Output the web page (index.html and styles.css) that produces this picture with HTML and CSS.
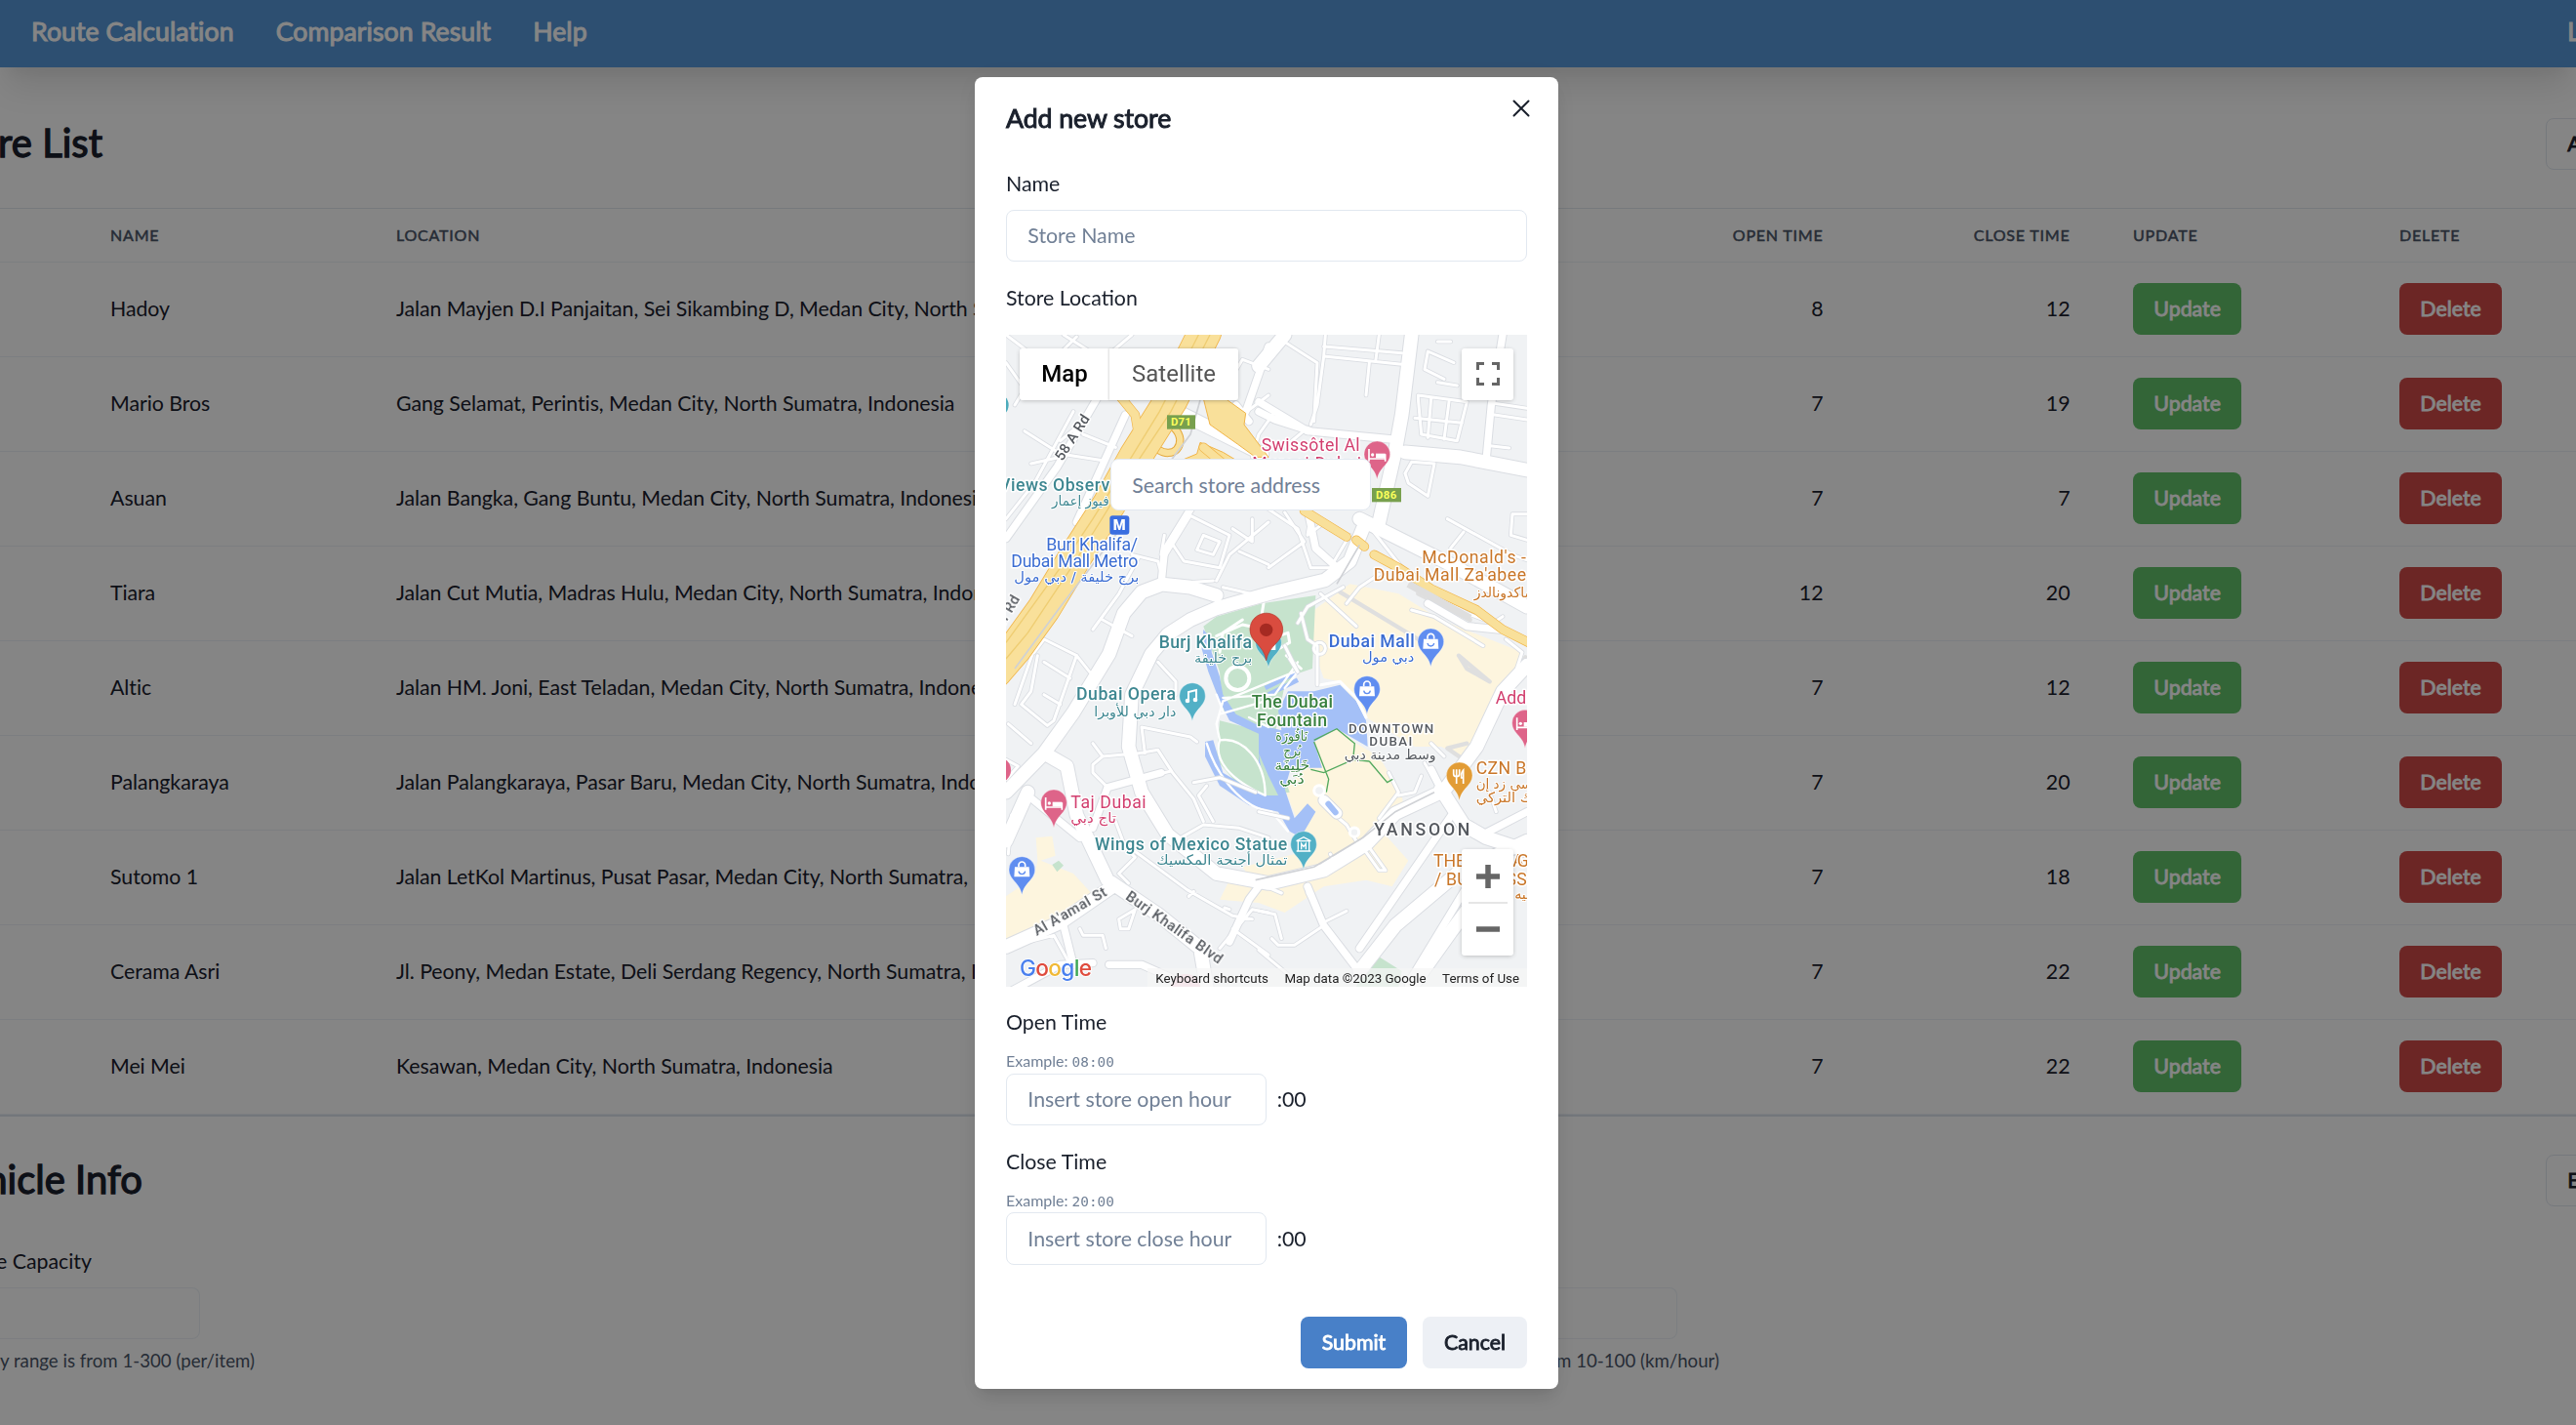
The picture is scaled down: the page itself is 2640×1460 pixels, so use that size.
FILE: index.html
```html
<!DOCTYPE html>
<html lang="en">
<head>
<meta charset="utf-8">
<title>Store List</title>
<link rel="stylesheet" href="styles.css">
</head>
<body>
<div class="app">
  <nav class="nav">
    <div class="nav-links"><a>Route Calculation</a><a>Comparison Result</a><a>Help</a></div>
    <a class="nav-end">Logout</a>
  </nav>

  <section class="section-head">
    <h2 class="title title-stores">Store List</h2>
    <button class="btn outline">Add Store</button>
  </section>

  <div class="table">
    <div class="row head"><span>Name</span><span>Location</span><span class="num">Open Time</span><span class="num">Close Time</span><span class="act">Update</span><span class="act">Delete</span></div>
    <div class="row"><span>Hadoy</span><span>Jalan Mayjen D.I Panjaitan, Sei Sikambing D, Medan City, North Sumatra, Indonesia</span><span class="num">8</span><span class="num">12</span><span class="act"><button class="btn green">Update</button></span><span class="act"><button class="btn red">Delete</button></span></div>
    <div class="row"><span>Mario Bros</span><span>Gang Selamat, Perintis, Medan City, North Sumatra, Indonesia</span><span class="num">7</span><span class="num">19</span><span class="act"><button class="btn green">Update</button></span><span class="act"><button class="btn red">Delete</button></span></div>
    <div class="row"><span>Asuan</span><span>Jalan Bangka, Gang Buntu, Medan City, North Sumatra, Indonesia</span><span class="num">7</span><span class="num">7</span><span class="act"><button class="btn green">Update</button></span><span class="act"><button class="btn red">Delete</button></span></div>
    <div class="row"><span>Tiara</span><span>Jalan Cut Mutia, Madras Hulu, Medan City, North Sumatra, Indonesia</span><span class="num">12</span><span class="num">20</span><span class="act"><button class="btn green">Update</button></span><span class="act"><button class="btn red">Delete</button></span></div>
    <div class="row"><span>Altic</span><span>Jalan HM. Joni, East Teladan, Medan City, North Sumatra, Indonesia</span><span class="num">7</span><span class="num">12</span><span class="act"><button class="btn green">Update</button></span><span class="act"><button class="btn red">Delete</button></span></div>
    <div class="row"><span>Palangkaraya</span><span>Jalan Palangkaraya, Pasar Baru, Medan City, North Sumatra, Indonesia</span><span class="num">7</span><span class="num">20</span><span class="act"><button class="btn green">Update</button></span><span class="act"><button class="btn red">Delete</button></span></div>
    <div class="row"><span>Sutomo 1</span><span>Jalan LetKol Martinus, Pusat Pasar, Medan City, North Sumatra, Indonesia</span><span class="num">7</span><span class="num">18</span><span class="act"><button class="btn green">Update</button></span><span class="act"><button class="btn red">Delete</button></span></div>
    <div class="row"><span>Cerama Asri</span><span>Jl. Peony, Medan Estate, Deli Serdang Regency, North Sumatra, Indonesia</span><span class="num">7</span><span class="num">22</span><span class="act"><button class="btn green">Update</button></span><span class="act"><button class="btn red">Delete</button></span></div>
    <div class="row"><span>Mei Mei</span><span>Kesawan, Medan City, North Sumatra, Indonesia</span><span class="num">7</span><span class="num">22</span><span class="act"><button class="btn green">Update</button></span><span class="act"><button class="btn red">Delete</button></span></div>
  </div>

  <section class="section-head vehicle">
    <h2 class="title title-vehicle">Vehicle Info</h2>
    <button class="btn outline">Edit</button>
  </section>
  <div class="fields">
    <div class="field cap">
      <label>Vehicle Capacity</label>
      <div class="box"></div>
      <p>Capacity range is from 1-300 (per/item)</p>
    </div>
    <div class="field speed">
      <label>Speed</label>
      <div class="box"></div>
      <p>Speed range is from 10-100 (km/hour)</p>
    </div>
  </div>
</div>

<div class="overlay">
  <div class="modal">
    <svg class="close" viewBox="0 0 22 22"><path d="M3.500 3.500 18.500 18.500M18.500 3.500 3.500 18.500"/></svg>
    <header>Add new store</header>
    <div class="body">
      <label>Name</label>
      <div class="input name">Store Name</div>
      <label class="loc">Store Location</label>
      <div class="map">
        <svg class="tiles" viewBox="33 24 1602 2004" preserveAspectRatio="none">
          <defs>
            <g id="lanes">
              <path d="M33 110 90 190 60 240M33 24 160 120 250 30M210 24 330 100 420 24M90 320 200 390 330 410M260 300 200 350M270 330 370 370M33 590 120 480 240 260M110 420 200 400M420 700 500 720 520 790 670 780M520 710 600 580M510 700 520 640M600 580 720 640 690 740 580 720 540 660 600 580M640 640 690 660 670 700 620 685zM680 780 720 700 840 600M700 800 830 830M750 690 840 730M330 900 420 950M440 710 380 820 300 930M120 1000 150 960 250 1010 290 1060M130 960 60 1160M840 130 760 100 700 200M760 270 840 210M790 590 790 660 730 620"/>
              <path d="M130 1010 110 1120 80 1160 160 1225 180 1210 250 1010M150 1030 230 1080M150 1130 200 1160M40 1220 110 1280M33 1330 70 1350 35 1390M500 1030 555 1090 555 1130M460 1310 450 1230 600 1260 620 1275M330 1320 300 1280M330 1320 440 1310 500 1300 545 1370 610 1450 640 1520M345 1415 300 1370 300 1345 330 1320M345 1415 540 1365M650 1410 625 1440 670 1520M610 1400 690 1385 800 1430M570 1570 640 1530 750 1540 840 1570M370 1520 400 1600 430 1630 380 1680 410 1710M400 1590 590 1730 730 1810 790 1820M50 1500 40 1620M100 1890 180 1870 230 1960M260 1850 270 1870 330 1870 340 1910M430 1790 380 1820 385 1850 410 1850 430 1790M690 1910 790 1790 840 1800M730 1850 840 1930M595 1750 610 1735M720 1790 705 1785"/>
              <path d="M1015 24 1010 90 1250 115M1010 60 1250 80M1150 110 1140 210M1180 24 1170 100M880 40 990 110 980 290M1010 90 990 240 970 300M1300 220 1310 330 1420 350 1450 230 1300 210zM1340 220 1330 340M1395 230 1380 345M1290 280 1435 295M1360 45 1400 45M1410 110 1330 75 1320 130 1380 160M1360 170 1420 180M1535 235 1635 250M1535 270 1635 285M1520 365 1580 372M1260 450 1270 480 1330 520 1350 420 1280 415 1260 450M1390 590 1590 700 1700 740M1400 680 1440 630M1635 575 1590 575 1585 640 1635 655M860 260 810 330 790 400M960 310 900 360"/>
              <path d="M840 560 930 620 970 740 1030 740 1090 640M890 570 950 660 840 740M970 580 960 640 1000 610M1000 820 1110 920M930 910 960 860 1070 800M940 880 960 960 990 980 990 1100M1080 850 1120 800 1180 760M1280 870 1350 890 1500 980M1570 960 1620 1000 1600 1060M905 1020 930 1060 890 980M1140 600 1290 790 1450 880 1530 910 1560 890"/>
              <path d="M1000 1430 1020 1480 1080 1530 1110 1580M1130 1600 1180 1670 1200 1670 1150 1600M1180 1510 1240 1430 1210 1370M1240 1440 1290 1430 1310 1380M1320 1340 1360 1410M1380 1320 1340 1280M1040 1640 1030 1620M960 1740 1010 1830 1080 1795M1010 1840 920 1900 870 1900 850 1880M810 1795 860 1805 880 1880M810 1915 900 1990M1540 1490 1520 1430M880 1740 810 1710M810 1490 900 1510"/>
              <circle cx="997" cy="988" r="18" fill="none"/>
            </g>
            <g id="streets">
              <path d="M33 650 190 430 330 190M840 60 770 260M400 270 250 600M740 240 780 290M1560 24 1525 240 1510 400M960 320 1220 345M810 230 960 320M810 260 860 285 970 320M1330 850 1450 920 1550 930M1410 1490 1120 1910M1500 1560 1635 1490M1450 1720 1280 2000M960 1720 1010 1840 1110 1970M720 1890 780 1760 810 1720M100 1440 260 1570M300 1540 345 1415 510 1370M350 1960 450 1960 540 2000M33 2050 200 1960 300 1955M210 1840 240 1960M1340 1360 1400 1480M510 790 520 690 600 560M960 560 985 680 1040 730"/>
            </g>
            <g id="avenues">
              <path d="M480 1005 420 1130 410 1290 450 1430 530 1560 680 1680 840 1710 1010 1670 1140 1590 1230 1495 1380 1425 1480 1290 1560 1120 1635 1040M350 1005 240 1185 150 1310 33 1430M150 1310 220 1350 250 1500 345 1700 500 1805 630 1910 650 2028M33 1905 200 1830 360 1720M1280 24 1250 270 1230 380 1180 600M1260 385 1430 400 1635 440M810 120 890 24M540 250 820 390M1120 590 1260 660 1400 730 1635 860M1120 1980 1230 1840 1420 1680 1635 1580M1370 1420 1440 1530 1510 1570 1635 1610M1520 1700 1400 1860 1280 2028M33 1580 100 1430M350 1005 395 880 450 815 513 791 600 800 680 825M480 1005 530 945 600 900 680 865 850 817 1014 778 1090 720 1130 620"/>
            </g>
            <path id="highway" d="M645 14 540 225 430 400 350 545 250 700 150 865 60 990 0 1060"/>
            <path id="ramps" d="M385 215 430 270 440 330M640 370 700 420M950 565 1080 645M1110 655 1135 675M1165 700 1240 740 1340 805 1480 870 1560 930 1640 970"/>
            <path id="pin" d="M0 58C-6 20-40 12-40-20a40 40 0 0 1 80 0C40 12 6 20 0 58z" stroke="#fff" stroke-opacity=".55" stroke-width="2"/>
            <g id="bag" fill="#fff"><path d="M-22-22h44l2 30h-48z"/><path d="M-10-22v-6a10 10 0 0 1 20 0v6" fill="none" stroke="#fff" stroke-width="5"/><path d="M-10-9c2 12 18 12 20 0" fill="none" stroke="#5f8df0" stroke-width="4"/></g>
            <g id="bed" fill="none" stroke="#fff" stroke-width="5"><path d="M-25-36V2M25-20V2M-25-6H25"/><path d="M-4-22H25V-8H-4z" fill="#fff" stroke="none"/><circle cx="-14" cy="-18" r="5" fill="#fff" stroke="none"/></g>
          </defs>
          <rect x="33" y="24" width="1602" height="2004" fill="#f0f2f4"/>
          <g fill="#fdf5de">
            <path d="M980 870 1090 790 1240 820 1370 900 1620 1000 1610 1060 1440 1320 1370 1290 1290 1290 1140 1200 1060 1090 1010 1080 960 940z"/>
            <path d="M980 1270 1050 1230 1110 1280 1180 1320 1250 1440 1260 1500 1180 1540 1270 1640 1220 1720 1140 1700 1010 1720 890 1800 810 1770 690 1760 720 1700 780 1690 760 1660 960 1610 940 1560 980 1490 930 1520 890 1420 960 1350z"/>
            <path d="M125 1570 175 1565 185 1625 140 1640 240 1680 300 1745 200 1820 33 1920V1750L120 1690 130 1640z"/>
          </g>
          <path d="M680 890 820 850 985 825 975 1050 930 1065 890 1100 860 1250 700 1180 690 1060 640 920z M690 1210 810 1240 860 1300 905 1430 830 1440 740 1400 680 1330z M175 1653 195 1640 210 1655 190 1675z M1140 1950 1170 1930 1250 1980 1240 2028H1110z" fill="#c6e3cd"/>
          <path d="M640 930 665 960 665 1000 690 1075 700 1130 740 1190 800 1220 880 1240 870 1180 900 1120 980 1120 1060 1100 1110 1150 1140 1210 1145 1290 1050 1235 980 1275 1005 1355 970 1355 910 1350 890 1420 920 1510 960 1465 985 1490 950 1550 950 1575 905 1550 870 1490 780 1470 690 1410 645 1320 645 1275 670 1270 700 1370 800 1430 840 1425 810 1340 810 1250 720 1210 690 1150 655 1060 635 990z" fill="#a4c0f7"/>
          <path d="M690 1270C670 1330 720 1390 830 1440 830 1330 760 1260 690 1270zM810 1310 840 1380 870 1440 830 1440z" fill="#c6e3cd"/>
          <path d="M830 1110 930 1060M840 1130 930 1085" stroke="#a4c0f7" stroke-width="14"/>
          <g fill="none" stroke="#fff" stroke-linejoin="round" stroke-linecap="round">
            <path d="M690 1270C670 1330 720 1390 830 1440 830 1330 760 1260 690 1270zM690 1270 680 1220 700 1150 920 1060M700 1140 860 1130 930 1030M690 1190 830 1150M650 1280C680 1380 760 1480 850 1490L900 1550M780 1200 840 1230M700 1180 680 1130M930 1060 890 1110" stroke-width="7"/>
            <circle cx="745" cy="1080" r="36" stroke-width="12"/>
            <path d="M680 950 760 915 830 930M690 1000 700 940 760 900M870 950 900 940 905 970 870 990M820 880 825 850M895 1010 940 1050M1000 1100 1060 1090 1110 1140 1140 1200" stroke-width="9"/>
          </g>
          <path d="M1450 1280 1390 1295 1440 1330 1630 1015M1060 815 1350 990M1300 820 1460 900M1425 1010 1520 1090 1450 1050z" class="service"/>
          <use href="#lanes" class="case lane"/><use href="#streets" class="case street"/><use href="#avenues" class="case avenue"/>
          <use href="#lanes" class="fill lane"/><use href="#streets" class="fill street"/><use href="#avenues" class="fill avenue"/>
          <path d="M635 200 700 215 770 265 765 300 840 400 800 400 745 360 660 300zM630 355 700 385 750 415 560 415 620 390z" fill="#f9e09a" stroke="#f0b54a" stroke-width="3"/>
          <path d="M560 225 470 330M480 350C480 270 560 290 568 345 570 400 500 400 480 350zM450 300 380 440" fill="none" stroke="#e5a93d" stroke-width="25"/>
          <path d="M560 225 470 330M480 350C480 270 560 290 568 345 570 400 500 400 480 350zM450 300 380 440" fill="none" stroke="#f9e09a" stroke-width="19"/>
          <use href="#ramps" class="hw-case ramp"/><use href="#highway" class="hw-case main"/>
          <use href="#ramps" class="hw ramp"/><use href="#highway" class="hw main"/>
          <path d="M660 24 540 260 440 410 340 570 240 730 100 940 33 1020M625 24 505 260 400 430 300 590 200 740 33 970" fill="none" stroke="#efcd72" stroke-width="4"/>
          <path d="M630 225 600 330 540 410M400 600 200 860 60 1050M1120 670 1050 790M800 1700 980 1660 1130 1570 1230 1490 1350 1430" fill="none" stroke="#cfd1d5" stroke-width="5"/>
          <path d="M1270 790 1460 895" stroke="#dedede" stroke-width="22"/>
          <path d="M980 1270 1050 1235 1105 1280 1100 1330 1010 1370 970 1360M1150 1335 1205 1400 1222 1390M1100 1330 1150 1335M980 1275 1025 1390 1018 1430" fill="none" stroke="#52a95e" stroke-width="4"/>
          <path d="M1010 1455 1050 1495" stroke="#d9dce1" stroke-width="38" stroke-linecap="round"/><path d="M1010 1455 1050 1495" stroke="#fff" stroke-width="32" stroke-linecap="round"/><path d="M1024 1466 1046 1492" stroke="#a4c0f7" stroke-width="18" stroke-linecap="round"/>
          <circle cx="996" cy="1425" r="16" class="ring"/><circle cx="1104" cy="1553" r="14" class="ring"/>
          <circle cx="585" cy="2035" r="46" fill="#f0bccb"/>
          <circle cx="5" cy="240" r="36" fill="#4cabbb"/><circle cx="8" cy="1362" r="40" fill="#de6489"/>

          <rect x="528" y="271" width="87" height="43" fill="#78a04e"/><text x="540" y="304" class="shield" textLength="62">D71</text>
          <rect x="1158" y="495" width="90" height="43" fill="#78a04e"/><text x="1170" y="528" class="shield" textLength="64">D86</text>

          <use href="#pin" x="606" y="1154" fill="#52b0c6" /><path d="M594 1150v-28l24-6v30" fill="none" stroke="#fff" stroke-width="6"/><circle cx="591" cy="1149" r="7" fill="#fff"/><circle cx="615" cy="1146" r="7" fill="#fff"/>
          <use href="#pin" x="180" y="1482" fill="#de6489"/><use href="#bed" x="180" y="1482"/>
          <use href="#pin" x="1174" y="411" fill="#de6489"/><use href="#bed" x="1174" y="411"/>
          <use href="#pin" x="1629" y="1237" fill="#de6489"/><use href="#bed" x="1629" y="1237"/>
          <use href="#pin" x="82" y="1688" fill="#5f8df0"/><use href="#bag" x="82" y="1682"/>
          <use href="#pin" x="1339" y="987" fill="#5f8df0"/><use href="#bag" x="1339" y="981"/>
          <use href="#pin" x="1143" y="1133" fill="#5f8df0"/><use href="#bag" x="1143" y="1127"/>
          <use href="#pin" x="1427" y="1398" fill="#e29c35"/><path d="M1409 1360v14q0 8 9 8t9-8v-14M1418 1360v44M1439 1404v-42q-8 8-6 24h6" fill="none" stroke="#fff" stroke-width="5"/>
          <use href="#pin" x="948" y="1610" fill="#52b0c6"/><path d="M926 1580 948 1568 970 1580zM931 1582v28M965 1582v28M926 1611h44M941 1606v-18l7 9 7-9v18" fill="none" stroke="#fff" stroke-width="4"/>
          <use href="#pin" x="840" y="990" fill="#52b0c6"/><path d="M850 975h12v18h-16z" fill="#fff"/>
          <path d="M833 1025C825 975 783 970 783 930a50 50 0 0 1 101 0c0 40-42 45-51 95z" fill="#d94c3f" stroke="#b5352c" stroke-width="2"/><circle cx="833" cy="931" r="20" fill="#a52a22"/>

          <rect x="352" y="580" width="60" height="58" rx="9" fill="#3a6ee0"/><text x="362" y="624" class="metro" textLength="40">M</text>
          <g class="lb teal">
            <text x="12" y="503" class="b" textLength="340">Views Observ</text>
            <text x="350" y="550" class="ar end" textLength="176" lengthAdjust="spacingAndGlyphs">فيوز إعمار</text>
            <text x="503" y="988" class="b" textLength="286">Burj Khalifa</text>
            <text x="790" y="1033" class="ar end" textLength="178" lengthAdjust="spacingAndGlyphs">برج خليفة</text>
            <text x="249" y="1146" class="b" textLength="306">Dubai Opera</text>
            <text x="556" y="1197" class="ar end" textLength="252" lengthAdjust="spacingAndGlyphs">دار دبي للأوبرا</text>
            <text x="306" y="1608" class="b" textLength="592">Wings of Mexico Statue</text>
            <text x="898" y="1652" class="ar end" textLength="402" lengthAdjust="spacingAndGlyphs">تمثال أجنحة المكسيك</text>
          </g>
          <g class="lb blue">
            <text x="157" y="687" textLength="281">Burj Khalifa/</text>
            <text x="49" y="739" textLength="390">Dubai Mall Metro</text>
            <text x="442" y="784" class="ar end" textLength="384" lengthAdjust="spacingAndGlyphs">برج خليفة / دبي مول</text>
            <text x="1025" y="984" class="b" textLength="264">Dubai Mall</text>
            <text x="1288" y="1030" class="ar end" textLength="160" lengthAdjust="spacingAndGlyphs">دبي مول</text>
          </g>
          <g class="lb pink">
            <text x="818" y="382" textLength="303">Swissôtel Al</text>
            <text x="790" y="437" textLength="335">Murooj Dubai</text>
            <text x="232" y="1478" textLength="232">Taj Dubai</text>
            <text x="372" y="1524" class="ar end" textLength="140" lengthAdjust="spacingAndGlyphs">تاج دبي</text>
            <text x="1538" y="1158">Address</text>
          </g>
          <g class="lb orange">
            <text x="1312" y="725" textLength="320">McDonald's -</text>
            <text x="1163" y="781" textLength="469">Dubai Mall Za'abee</text>
            <text x="1650" y="830" class="ar end" textLength="178" lengthAdjust="spacingAndGlyphs">ماكدونالدز</text>
            <text x="1478" y="1373" textLength="155">CZN B</text>
            <text x="1650" y="1419" class="ar end" textLength="172" lengthAdjust="spacingAndGlyphs">سي زد إن</text>
            <text x="1650" y="1462" class="ar end" textLength="172" lengthAdjust="spacingAndGlyphs">ك التركي</text>
            <text x="1347" y="1660" textLength="278">THE OPERA</text><text x="1604" y="1660" class="cut"> G</text>
            <text x="1350" y="1715" textLength="284">/ BUSINESS</text>
            <text x="1645" y="1758" class="ar end">ـيه</text>
          </g>
          <g class="lb green">
            <text x="788" y="1169" class="b" textLength="250">The Dubai</text>
            <text x="804" y="1227" class="b" textLength="216">Fountain</text>
            <text x="960" y="1271" class="ar end" textLength="98" lengthAdjust="spacingAndGlyphs">نَافُورَة</text>
            <text x="940" y="1316" class="ar end" textLength="54" lengthAdjust="spacingAndGlyphs">بُرج</text>
            <text x="967" y="1361" class="ar end" textLength="108" lengthAdjust="spacingAndGlyphs">خَلِيفَة</text>
            <text x="950" y="1404" class="ar end" textLength="76" lengthAdjust="spacingAndGlyphs">دُبَي</text>
          </g>
          <g class="lb grey">
            <text x="1086" y="1248" class="dt" textLength="262">DOWNTOWN</text>
            <text x="1150" y="1288" class="dt" textLength="132">DUBAI</text>
            <text x="1355" y="1330" class="ar end" textLength="282" lengthAdjust="spacingAndGlyphs">وسط مدينة دبي</text>
            <text x="1165" y="1563" class="ys" textLength="294">YANSOON</text>
            <text transform="translate(206 414)rotate(-57)" class="rd" textLength="158">58 A Rd</text>
            <text transform="translate(24 926)rotate(-60)" class="rd" textLength="105">er Rd</text>
            <text transform="translate(128 1872)rotate(-30)" class="rd" textLength="252">Al A'amal St</text>
            <text transform="translate(398 1757)rotate(35)" class="rd" textLength="352">Burj Khalifa Blvd</text>
          </g>
          <text x="75" y="1995" class="google" textLength="222"><tspan fill="#4a80ee">G</tspan><tspan fill="#df4b3d">o</tspan><tspan fill="#f0b936">o</tspan><tspan fill="#4a80ee">g</tspan><tspan fill="#3ea757">l</tspan><tspan fill="#df4b3d">e</tspan></text>
        </svg>
        <div class="maptype"><b>Map</b><span>Satellite</span></div>
        <div class="full"><svg viewBox="0 0 24 24"><path d="M1.500 8V1.500H8M16 1.500h6.500V8M22.500 16v6.500H16M8 22.500H1.500V16"/></svg></div>
        <div class="zoom"><svg viewBox="0 0 24 24"><path d="M0 12h24M12 0v24"/></svg><i></i><svg viewBox="0 0 24 24"><path d="M0 12h24"/></svg></div>
        <div class="input search">Search store address</div>
        <div class="credits"><span>Keyboard shortcuts</span><span>Map data ©2023 Google</span><span>Terms of Use</span></div>
      </div>
      <label>Open Time</label>
      <small>Example: <code>08:00</code></small>
      <div class="hour"><div class="input">Insert store open hour</div><span>:00</span></div>
      <label>Close Time</label>
      <small>Example: <code>20:00</code></small>
      <div class="hour"><div class="input">Insert store close hour</div><span>:00</span></div>
    </div>
    <footer><button class="btn blue">Submit</button><button class="btn light">Cancel</button></footer>
  </div>
</div>
</body>
</html>
```
FILE: styles.css
```css
html { font-size: 21.333px; }
* { box-sizing: border-box; }
body { margin: 0; overflow: hidden; background: #fff; color: #1a202c; font: 400 1rem/1.5 Lato, sans-serif; }
h2, p { margin: 0; }
.app { width: 2640px; height: 1460px; overflow: hidden; }

.nav { height: 69px; padding: 0 0 6px 32px; display: flex; align-items: center; justify-content: space-between; background: #5798d9; color: #fff; font-size: 26.67px; letter-spacing: .07px; -webkit-text-stroke: 1px; box-shadow: 0 27px 33px -7px rgba(0,0,0,.1), 0 13px 13px -7px rgba(0,0,0,.04); white-space: nowrap; }
.nav-links { display: flex; gap: 43px; }
.nav-end { width: 9px; }

.section-head { height: 144px; padding-top: 13px; display: flex; align-items: center; justify-content: space-between; }
.title { display: flex; justify-content: flex-end; white-space: nowrap; font-weight: 400; font-size: 40px; line-height: 53px; padding-bottom: 2px; -webkit-text-stroke: 1.3px; }
.title-stores { width: 105px; }
.title-vehicle { width: 146px; }
.btn { height: 53.33px; padding: 0 21.33px; border: 0; border-radius: 8px; font: 400 21.333px/1.2 Lato, sans-serif; -webkit-text-stroke: .85px; color: #fff; white-space: nowrap; }
.outline { width: 110px; margin-right: -79px; text-align: left; background: #fff; border: 1.33px solid #e2e8f0; color: #1a202c; }
.green { background: #62c26a; }
.red { background: #d04a48; }
.blue { width: 109px; background: #4880c8; }
.light { width: 107px; background: #edf0f5; color: #1a202c; }

.table { border-top: 1.33px solid #e2e8f0; border-bottom: 2px solid #dde3ec; }
.row { height: 97px; padding-left: 113px; display: grid; grid-template-columns: 293px 1000px 462.500px 253px 337.500px 180px; align-items: center; border-bottom: 1.33px solid #edf2f7; white-space: nowrap; letter-spacing: -.055px; }
.head { height: 54.500px; font-size: 16px; letter-spacing: .05em; text-transform: uppercase; color: #4a5568; -webkit-text-stroke: .5px; }
.num { text-align: right; }
.act { padding-left: 64.500px; display: flex; }
.act + .act { padding-left: 0; }

.vehicle { height: 132px; padding-top: 0; }
.fields { display: flex; padding-top: 1px; }
.field { width: 205px; white-space: nowrap; }
.field.cap label { display: flex; width: 94px; justify-content: flex-end; }
.field label, .field .box { display: block; }
.field .box { height: 53.33px; margin-top: 10.67px; border: 1.33px solid #edf2f7; border-left: 0; border-radius: 0 8px 8px 0; }
.field p { margin-top: 8px; display: flex; justify-content: flex-end; font-size: 18.67px; color: #4a5568; }
.cap p { width: 261px; }
.speed { width: 513.500px; margin-left: 1000px; }
.speed p { width: 557px; }

.overlay { position: fixed; inset: 0; display: flex; align-items: flex-start; justify-content: center; background: rgba(0,0,0,.48); }
.modal { position: relative; width: 598px; height: 1344px; margin: 79px 44px 0 0; background: #fff; border-radius: 8px; box-shadow: 0 13px 20px -4px rgba(0,0,0,.1), 0 5px 8px -3px rgba(0,0,0,.05), 0 0 30px rgba(0,0,0,.05); }
.modal header { padding: 22.33px 32px 20.33px; font-size: 26.67px; line-height: 40px; letter-spacing: -.05px; -webkit-text-stroke: 1px; }
.close { position: absolute; top: 21px; right: 27px; width: 22px; height: 22px; fill: none; stroke: #1a202c; stroke-width: 2; stroke-linecap: round; }
.body { padding: 10.67px 32px; }
.body label { display: block; line-height: 32px; margin-bottom: 10.67px; }
.input { height: 53.33px; padding: 1.500px 21.33px 0; display: flex; align-items: center; border: 1.33px solid #e2e8f0; border-radius: 8px; background: #fff; color: #718096; white-space: nowrap; }
.name { margin-bottom: 20.800px; }
.body .loc { margin-bottom: 21.860px; }
.map { position: relative; height: 668px; margin-bottom: 20.500px; overflow: hidden; }
.tiles { display: block; width: 534px; height: 668px; }
.body small { display: block; height: 25.500px; font-size: 16px; line-height: 26px; color: #718096; }
code { font: 14.400px "DejaVu Sans Mono", monospace; }
.hour { display: flex; align-items: center; gap: 10.67px; margin-bottom: 21.33px; }
.hour .input { width: 267px; }
.hour span { padding-top: 1px; }
.hour:last-child { margin-bottom: 21px; }
.modal footer { padding: 21.33px 32px; display: flex; justify-content: flex-end; gap: 16px; }

/* map drawing */
.case, .fill, .hw, .hw-case, .service { fill: none; stroke-linejoin: round; stroke-linecap: round; }
.case { stroke: #dadde2; }
.fill { stroke: #fff; }
.case.lane { stroke-width: 14; } .fill.lane { stroke-width: 9; }
.case.street { stroke-width: 28; } .fill.street { stroke-width: 22; }
.case.avenue { stroke-width: 47; } .fill.avenue { stroke-width: 41; }
.hw-case { stroke: #f0b54a; } .hw { stroke: #f9e09a; }
.hw-case.main { stroke-width: 104; } .hw.main { stroke-width: 99; }
.hw-case.ramp { stroke-width: 29; } .hw.ramp { stroke-width: 25; }
.service { stroke: #dfdfdf; stroke-width: 13; }
.ring { fill: #f0f2f4; stroke: #fff; stroke-width: 9; }
.tiles text { font-family: Roboto, "DejaVu Sans", sans-serif; }
.lb text { font-size: 53px; paint-order: stroke; stroke: #fff; stroke-width: 9px; stroke-linejoin: round; }
.lb .b { font-weight: 500; }
.tiles .lb .ar { font-family: "DejaVu Sans", sans-serif; font-size: 43px; stroke-width: 6px; }
.end { text-anchor: end; }
.teal { fill: #3e8791; }
.lb.blue { fill: #3a6cd2; }
.pink { fill: #d23e6e; }
.orange { fill: #c97628; }
.lb.green { fill: #39813f; }
.grey { fill: #55595f; }
.lb .dt { font-size: 40px; font-weight: 500; }
.lb .ys { font-size: 53px; font-weight: 500; }
.lb .rd { font-size: 44px; font-weight: 500; }
.shield { font-size: 34px; font-weight: 700; fill: #fbff5c; }
.metro { font-size: 44px; font-weight: 900; fill: #fff; }
.tiles .google { font: 500 68px Inter, sans-serif; paint-order: stroke; stroke: #fff; stroke-width: 5px; }

/* map controls */
.maptype, .full, .zoom, .search, .credits { position: absolute; }
.maptype { left: 14px; top: 14px; width: 224px; height: 53px; display: grid; grid-template-columns: 92px 1fr; align-items: center; text-align: center; background: #fff; border-radius: 3px; box-shadow: 0 1px 5px -1px rgba(0,0,0,.3); font-family: Roboto, sans-serif; font-size: 24px; }
.maptype b { font-weight: 500; color: #000; }
.maptype span { height: 53px; line-height: 53px; color: #565656; box-shadow: -1px 0 2px rgba(0,0,0,.15); }
.full, .zoom { right: 14px; width: 53px; background: #fff; border-radius: 3px; box-shadow: 0 1px 5px -1px rgba(0,0,0,.3); display: flex; align-items: center; justify-content: center; }
.full { top: 14px; height: 53px; }
.full svg, .zoom svg { width: 24px; height: 24px; fill: none; stroke: #666; stroke-width: 3; }
.zoom svg { stroke-width: 5.500; }
.zoom { top: 527.500px; height: 108.500px; flex-direction: column; gap: 14px; }
.zoom i { width: 40px; height: 2px; background: #e6e6e6; }
.search { left: 107px; top: 127px; width: 267px; height: 53px; padding-top: 2.500px; }
.credits { right: 0; bottom: 0; height: 19px; padding: 0 8px 0 8px; display: flex; gap: 16.500px; background: rgba(245,245,245,.75); color: #222; font: 13.33px/21px Roboto, sans-serif; white-space: nowrap; }
```
